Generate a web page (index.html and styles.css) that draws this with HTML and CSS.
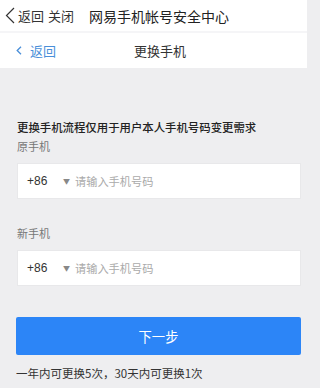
FILE: index.html
```html
<!DOCTYPE html>
<html lang="zh">
<head>
<meta charset="utf-8">
<link rel="stylesheet" href="styles.css">
</head>
<body>
<div class="page">
<div class="topbar">
  <svg class="top-chev" width="10" height="17" viewBox="0 0 10 17"><path d="M9 1 L1.5 8.5 L9 16" fill="none" stroke="#333" stroke-width="1.2"/></svg>
  <span class="top-link">返回</span>
  <span class="top-link close">关闭</span>
  <span class="top-title">网易手机帐号安全中心</span>
</div>
<div class="navbar">
  <span class="nav-back">
    <svg width="6" height="9" viewBox="0 0 6 9"><path d="M5 0.8 L1.2 4.5 L5 8.2" fill="none" stroke="#4a8fd9" stroke-width="1.3"/></svg>
    <span class="nav-back-text">返回</span>
  </span>
  <span class="nav-title">更换手机</span>
</div>
<div class="content">
  <div class="intro">更换手机流程仅用于用户本人手机号码变更需求</div>
  <div class="label">原手机</div>
  <div class="field">
    <span class="code">+86</span>
    <span class="arrow">▼</span>
    <span class="placeholder">请输入手机号码</span>
  </div>
  <div class="label second">新手机</div>
  <div class="field">
    <span class="code">+86</span>
    <span class="arrow">▼</span>
    <span class="placeholder">请输入手机号码</span>
  </div>
  <div class="button">下一步</div>
  <div class="note">一年内可更换5次，30天内可更换1次</div>
</div>
</div>
</body>
</html>
```
FILE: styles.css
```css
html, body {
  margin: 0;
  padding: 0;
  background: #eeeef0;
  font-family: "Noto Sans CJK SC", "Noto Sans", sans-serif;
  color: #333;
}
.page {
  width: 307px;
  min-height: 388px;
  background: #eeeef0;
}
.topbar {
  height: 31px;
  background: #fff;
  display: flex;
  align-items: center;
  border-bottom: 2px solid #f5f5f7;
}
.top-chev {
  margin-left: 5px;
  margin-right: 3px;
}
.top-link {
  font-size: 13px;
  line-height: 18px;
  color: #333;
}
.top-link.close {
  margin-left: 4px;
}
.top-title {
  margin-left: 15px;
  font-size: 14px;
  line-height: 18px;
  color: #222;
}
.navbar {
  height: 35px;
  background: #fff;
  display: flex;
  align-items: center;
}
.nav-back {
  display: flex;
  align-items: center;
  margin-left: 16px;
}
.nav-back-text {
  margin-left: 8px;
  font-size: 13px;
  line-height: 18px;
  color: #4a8fd9;
}
.nav-title {
  margin-left: 78px;
  font-size: 13px;
  line-height: 18px;
  color: #333;
}
.content {
  padding: 50px 6px 0 16px;
}
.intro {
  font-size: 11.4px;
  line-height: 18px;
  color: #222;
  font-weight: 500;
  margin-left: 1px;
}
.label {
  font-size: 11px;
  line-height: 18px;
  color: #777;
  margin-top: 1px;
  margin-left: 1px;
}
.label.second {
  margin-top: 25px;
}
.field {
  margin-top: 8px;
  margin-left: 1px;
  height: 34px;
  background: #fff;
  border: 1px solid #e8e8ea;
  display: flex;
  align-items: center;
}
.code {
  margin-left: 9px;
  font-size: 12px;
  font-family: "Liberation Sans", sans-serif;
  color: #333;
  width: 36px;
}
.arrow {
  font-size: 7px;
  color: #888;
  width: 12px;
}
.placeholder {
  font-size: 11.2px;
  color: #aaa;
}
.button {
  margin-top: 31px;
  height: 38px;
  background: #2c85f7;
  border-radius: 2px;
  color: #fff;
  font-size: 13.3px;
  display: flex;
  align-items: center;
  justify-content: center;
}
.note {
  margin-top: 9px;
  font-size: 11.5px;
  line-height: 18px;
  color: #333;
}
```
